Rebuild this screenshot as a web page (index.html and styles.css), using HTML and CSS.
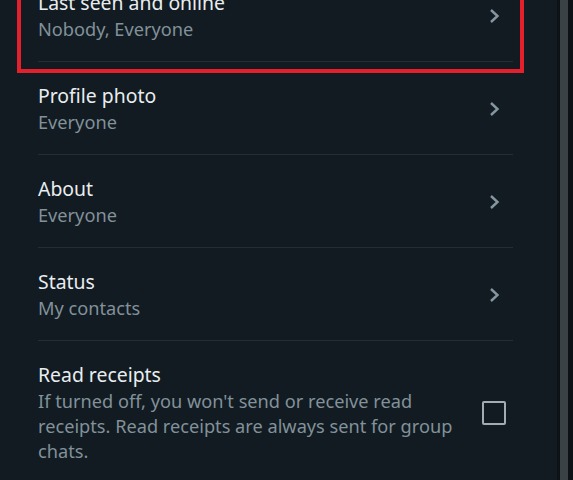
FILE: index.html
```html
<!DOCTYPE html>
<html lang="en">
<head>
<meta charset="utf-8">
<title>Privacy</title>
<link rel="stylesheet" href="styles.css">
</head>
<body>
<div class="window">
  <main class="pane">
    <div class="list">
      <div class="item">
        <div class="text">
          <div class="title">Last seen and online</div>
          <div class="sub">Nobody, Everyone</div>
        </div>
        <div class="side">
          <svg class="chev" viewBox="0 0 12 16" width="12" height="16"><polyline points="3,2 9.5,8 3,14" fill="none" stroke="currentColor" stroke-width="2.4"/></svg>
        </div>
      </div>
      <div class="item">
        <div class="text">
          <div class="title">Profile photo</div>
          <div class="sub">Everyone</div>
        </div>
        <div class="side">
          <svg class="chev" viewBox="0 0 12 16" width="12" height="16"><polyline points="3,2 9.5,8 3,14" fill="none" stroke="currentColor" stroke-width="2.4"/></svg>
        </div>
      </div>
      <div class="item">
        <div class="text">
          <div class="title">About</div>
          <div class="sub">Everyone</div>
        </div>
        <div class="side">
          <svg class="chev" viewBox="0 0 12 16" width="12" height="16"><polyline points="3,2 9.5,8 3,14" fill="none" stroke="currentColor" stroke-width="2.4"/></svg>
        </div>
      </div>
      <div class="item">
        <div class="text">
          <div class="title">Status</div>
          <div class="sub">My contacts</div>
        </div>
        <div class="side">
          <svg class="chev" viewBox="0 0 12 16" width="12" height="16"><polyline points="3,2 9.5,8 3,14" fill="none" stroke="currentColor" stroke-width="2.4"/></svg>
        </div>
      </div>
      <div class="item">
        <div class="text">
          <div class="title">Read receipts</div>
          <div class="sub">If turned off, you won't send or receive read receipts. Read receipts are always sent for group chats.</div>
        </div>
        <div class="side">
          <span class="checkbox"></span>
        </div>
      </div>
    </div>
    <div class="highlight"></div>
  </main>
  <div class="scrollbar"><div class="thumb"></div></div>
</div>
</body>
</html>
```
FILE: styles.css
```css
html, body {
  margin: 0;
  padding: 0;
  height: 100%;
  background: #111b21;
  overflow: hidden;
}
.window {
  display: flex;
  height: 100%;
}
.pane {
  position: relative;
  flex: 1;
  overflow: hidden;
  font-family: "Noto Sans", "Open Sans", sans-serif;
}
.list {
  margin-top: -31px;
  padding-left: 38px;
  padding-right: 44px;
}
.item {
  display: flex;
  align-items: center;
  padding: 21px 0 19px;
  border-bottom: 1px solid #222d34;
}
.text {
  flex: 1;
  min-width: 0;
  padding-right: 15px;
}
.title {
  font-size: 19.4px;
  line-height: 25px;
  color: #e9edef;
}
.sub {
  margin-top: 2px;
  font-size: 18.2px;
  line-height: 25px;
  color: #82919a;
}
.side {
  width: 38px;
  flex: none;
  display: flex;
  justify-content: center;
  align-items: center;
}
.chev {
  display: block;
  color: #8696a0;
}
.checkbox {
  display: block;
  width: 24px;
  height: 24px;
  box-sizing: border-box;
  border: 2px solid #a3acb1;
  border-radius: 2px;
}
.highlight {
  position: absolute;
  left: 17px;
  top: -20px;
  width: 507px;
  height: 93px;
  box-sizing: border-box;
  border: 4px solid #e3202b;
}
.scrollbar {
  width: 16px;
  flex: none;
  background: #0c1216;
  padding-left: 3px;
  box-sizing: border-box;
}
.thumb {
  width: 8px;
  height: 100%;
  background: #3a4246;
}
```
